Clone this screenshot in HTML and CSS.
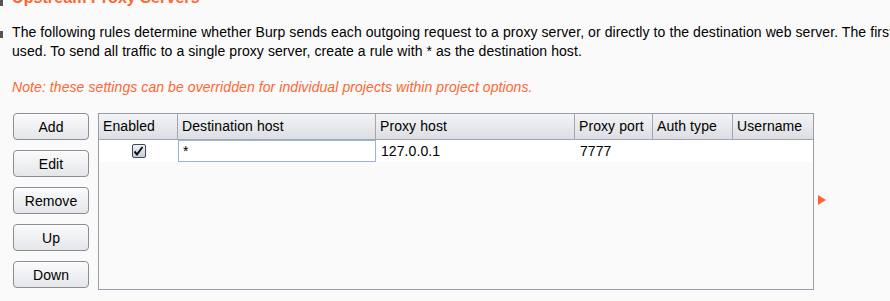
FILE: index.html
```html
<!DOCTYPE html>
<html>
<head>
<meta charset="utf-8">
<link rel="stylesheet" href="styles.css">
</head>
<body>
<div class="page">
  <div class="title-row"><span class="edge edge-title"></span><h1 class="title">Upstream Proxy Servers</h1></div>
  <div class="desc-row"><span class="edge edge-desc"></span>
    <p class="desc">The following rules determine whether Burp sends each outgoing request to a proxy server, or directly to the destination web server. The first rule that matches the destination host will be<br>used. To send all traffic to a single proxy server, create a rule with * as the destination host.</p>
  </div>
  <p class="note">Note: these settings can be overridden for individual projects within project options.</p>
  <div class="editor">
    <div class="buttons">
      <button class="btn">Add</button>
      <button class="btn">Edit</button>
      <button class="btn">Remove</button>
      <button class="btn">Up</button>
      <button class="btn">Down</button>
    </div>
    <div class="table">
      <div class="thead">
        <div class="th c1">Enabled</div>
        <div class="th c2">Destination host</div>
        <div class="th c3">Proxy host</div>
        <div class="th c4">Proxy port</div>
        <div class="th c5">Auth type</div>
        <div class="th c6">Username</div>
      </div>
      <div class="tr">
        <div class="td c1 center"><span class="check"><svg width="11" height="11" viewBox="0 0 11 11"><path d="M1.5 5.5 L4 8.5 L9.5 1" fill="none" stroke="#101010" stroke-width="2"/></svg></span></div>
        <div class="td c2 editing">*</div>
        <div class="td c3">127.0.0.1</div>
        <div class="td c4">7777</div>
        <div class="td c5"></div>
        <div class="td c6"></div>
      </div>
    </div>
    <div class="arrow"></div>
  </div>
</div>
</body>
</html>
```
FILE: styles.css
```css
html, body {
  margin: 0;
  padding: 0;
  background: #fafafa;
  overflow: hidden;
}
.page {
  width: 890px;
  height: 301px;
  overflow: hidden;
  font-family: "Liberation Sans", Arial, sans-serif;
  font-size: 14px;
  letter-spacing: 0.08px;
  color: #000;
}
.title-row {
  display: flex;
  align-items: flex-start;
  height: 6px;
  overflow: hidden;
}
.edge {
  display: block;
  width: 3px;
  background: #555;
  flex: none;
}
.edge-title {
  height: 6px;
}
.title {
  margin: -11px 0 0 9px;
  font-size: 16px;
  font-weight: bold;
  color: #ff6633;
  line-height: 17px;
  white-space: nowrap;
}
.desc-row {
  display: flex;
  align-items: flex-start;
  margin-top: 17px;
}
.edge-desc {
  height: 7px;
  margin-top: 8px;
}
.desc {
  margin: 0 0 0 9px;
  line-height: 19px;
  white-space: nowrap;
}
.note {
  margin: 17px 0 0 12px;
  line-height: 19px;
  color: #ff6633;
  font-style: italic;
}
.editor {
  display: flex;
  align-items: flex-start;
  margin-top: 16px;
  padding-left: 13px;
}
.buttons {
  display: flex;
  flex-direction: column;
  gap: 10px;
  width: 76px;
}
.btn {
  height: 27px;
  width: 76px;
  border: 1px solid #8a8d94;
  border-radius: 4px;
  background: linear-gradient(#fbfbfc, #e4e6ea);
  font-family: "Liberation Sans", Arial, sans-serif;
  font-size: 14px;
  letter-spacing: 0.08px;
  color: #000;
  padding: 0;
  box-shadow: inset 0 1px 0 #fff;
}
.table {
  margin-left: 9px;
  width: 714px;
  height: 175px;
  border: 1px solid #9a9cab;
  background: #fafafa;
}
.thead {
  display: flex;
  height: 25px;
  border-bottom: 1px solid #a3a5b0;
  background: linear-gradient(#f3f4f6, #dcdee3);
}
.th {
  line-height: 24px;
  padding-left: 4px;
  border-right: 1px solid #a3a5b0;
  box-sizing: border-box;
  white-space: nowrap;
  overflow: hidden;
}
.th.c6 { border-right: none; }
.c1 { width: 79px; }
.c2 { width: 198px; }
.c3 { width: 199px; }
.c4 { width: 78px; }
.c5 { width: 80px; }
.c6 { width: 80px; }
.tr {
  display: flex;
  height: 22px;
  background: #fff;
}
.td {
  line-height: 22px;
  padding-left: 5px;
  box-sizing: border-box;
}
.td.c1 { padding-left: 0; }
.center {
  display: flex;
  align-items: center;
  justify-content: center;
}
.check {
  display: flex;
  align-items: center;
  justify-content: center;
  width: 12px;
  height: 12px;
  border: 1px solid #3d4a5c;
  border-radius: 2px;
  background: linear-gradient(#eef1f6, #c5cdd9);
}
.editing {
  border: 1px solid #9ab6d6;
  line-height: 20px;
  padding-left: 4px;
  width: 198px;
}
.arrow {
  width: 0;
  height: 0;
  margin: 82px 0 0 4px;
  border-left: 8px solid #ff6633;
  border-top: 5px solid transparent;
  border-bottom: 5px solid transparent;
}
```
